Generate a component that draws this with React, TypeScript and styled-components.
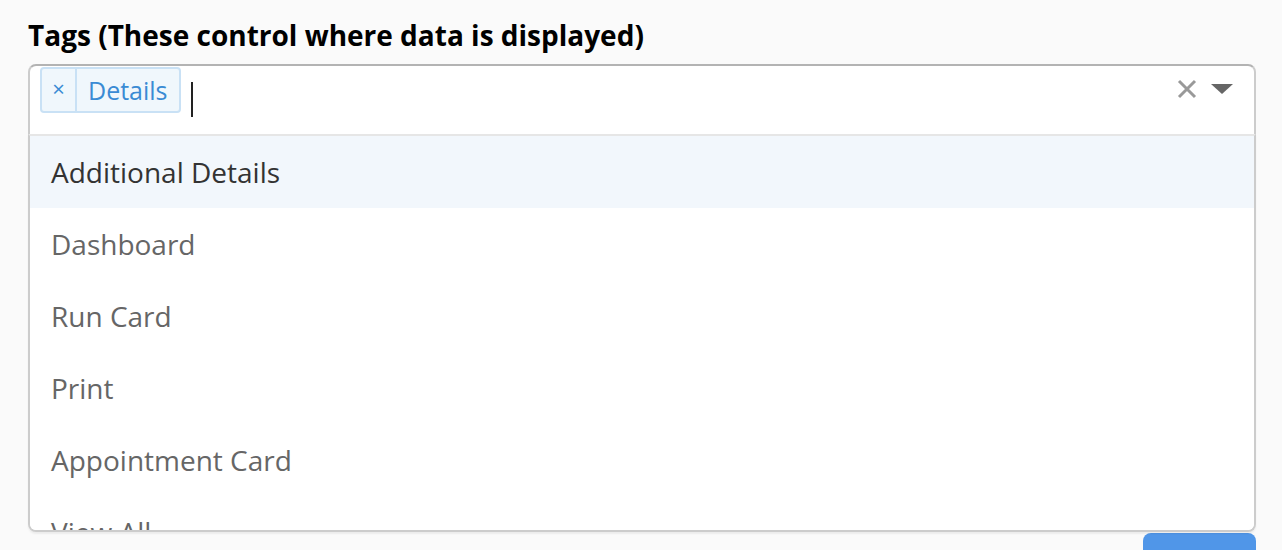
import React, { FC, useState } from 'react'
import styled, { createGlobalStyle } from 'styled-components'

const GlobalStyle = createGlobalStyle`
    html, body {
        margin: 0;
        padding: 0;
        background: #fafafa;
        font-family: "Open Sans", "Noto Sans", sans-serif;
        overflow: hidden;
    }
`

const Page = styled.div`
    padding: 16px 26px 0 28px;
`

const Label = styled.div`
    font-weight: bold;
    font-size: 28px;
    line-height: 38px;
    color: #000;
    margin-bottom: 10px;
`

const SelectWrap = styled.div`
    position: relative;
`

const Control = styled.div`
    height: 72px;
    box-sizing: border-box;
    background: #fff;
    border: 2px solid #ccc;
    border-color: #b3b3b3 #ccc #e6e6e6;
    border-radius: 8px 8px 0 0;
    display: flex;
    align-items: flex-start;
    padding: 1px 0 0 10px;
`

const ValueArea = styled.div`
    flex: 1;
    display: flex;
    align-items: flex-start;
`

const Tag = styled.div`
    display: flex;
    height: 46px;
    box-sizing: border-box;
    border: 2px solid #c9e1f5;
    background: #f0f7fc;
    border-radius: 4px;
    color: #3a8bd4;
    font-size: 25px;
`

const TagRemove = styled.span`
    width: 35px;
    display: flex;
    align-items: center;
    justify-content: center;
    border-right: 2px solid #c9e1f5;
    font-size: 22px;
    padding-bottom: 4px;
    box-sizing: border-box;
`

const TagLabel = styled.span`
    padding: 0 11px 0 11px;
    display: flex;
    align-items: center;
`

const Caret = styled.div`
    width: 2px;
    height: 35px;
    background: #222;
    margin: 15px 0 0 10px;
`

const Indicators = styled.div`
    display: flex;
    align-items: center;
    gap: 14px;
    padding: 12px 21px 0 0;
`

const IconBox = styled.span`
    display: flex;
    align-items: center;
    justify-content: center;
`

const Menu = styled.div`
    position: absolute;
    left: 0;
    right: 0;
    top: 70px;
    background: #fff;
    border: 2px solid #ccc;
    border-top-color: #e6e6e6;
    border-radius: 0 0 8px 8px;
    box-shadow: 0 2px 2px rgba(0, 0, 0, 0.06);
    height: 398px;
    box-sizing: border-box;
    overflow: hidden;
    z-index: 2;
`

const Option = styled.div<{ focused: boolean }>`
    height: 72px;
    display: flex;
    align-items: center;
    padding: 0 20px 0 21px;
    box-sizing: border-box;
    font-size: 28px;
    color: ${props => props.focused ? '#333' : '#666'};
    background: ${props => props.focused ? '#f2f7fc' : '#fff'};
`

const Footer = styled.div`
    display: flex;
    justify-content: flex-end;
    margin-top: 397px;
`

const SaveButton = styled.button`
    width: 113px;
    height: 110px;
    padding-top: 56px;
    border: none;
    border-radius: 8px;
    background: #5096e8;
    color: #fff;
    font-family: inherit;
    font-size: 26px;
`

const options = ['Additional Details', 'Dashboard', 'Run Card', 'Print', 'Appointment Card', 'View All']

const App: FC = () => {
    const [focused, setFocused] = useState(0)

    return (
        <>
            <GlobalStyle />
            <Page>
                <Label>Tags (These control where data is displayed)</Label>
                <SelectWrap>
                    <Control>
                        <ValueArea>
                            <Tag>
                                <TagRemove>×</TagRemove>
                                <TagLabel>Details</TagLabel>
                            </Tag>
                            <Caret />
                        </ValueArea>
                        <Indicators>
                            <IconBox>
                                <svg width='20' height='20' viewBox='0 0 20 20'>
                                    <path d='M2 2 L18 18 M18 2 L2 18' stroke='#999' strokeWidth='3' />
                                </svg>
                            </IconBox>
                            <IconBox>
                                <svg width='22' height='12' viewBox='0 0 22 12'>
                                    <path d='M0 1 L22 1 L11 11 Z' fill='#666' />
                                </svg>
                            </IconBox>
                        </Indicators>
                    </Control>
                    <Menu>
                        {options.map((o, i) =>
                            <Option key={o} focused={i === focused} onMouseEnter={() => setFocused(i)}>{o}</Option>
                        )}
                    </Menu>
                </SelectWrap>
                <Footer>
                    <SaveButton>Save</SaveButton>
                </Footer>
            </Page>
        </>
    )
}

export default App
